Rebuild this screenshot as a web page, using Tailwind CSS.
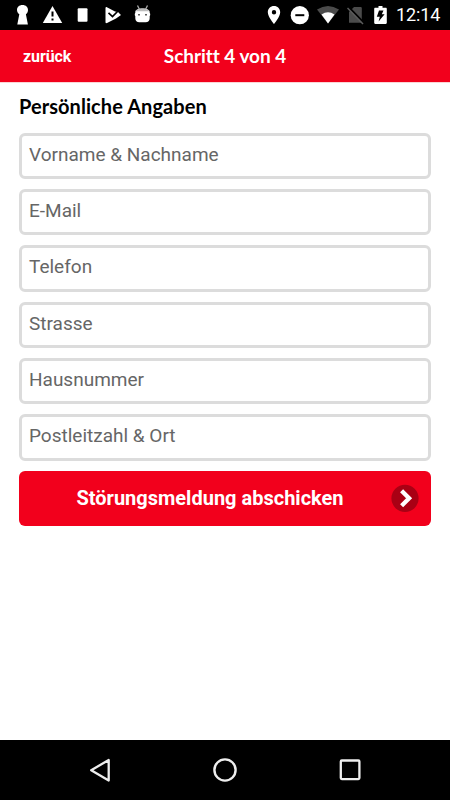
<!DOCTYPE html>
<html lang="de">
<head>
<meta charset="utf-8">
<title>Persönliche Angaben</title>
<script src="https://cdn.jsdelivr.net/npm/@tailwindcss/browser@4"></script>
</head>
<body class="bg-white">
<div class="flex h-[800px] w-[450px] flex-col overflow-hidden font-['Roboto',sans-serif]">
  <div class="flex h-[30px] shrink-0 items-start justify-between bg-black pl-[16px] pr-[10px] text-white">
    <div class="flex">
      <svg class="mr-[13px] h-[30px] w-[13px]" viewBox="16 0 13 30" fill="#fff"><path d="M22.500 5C19 5 17 7.200 17 10c0 2 1 3.300 2.300 4.200L17.300 24.500h10.600l-2-10.300C27.200 13.300 28 12 28 10c0-2.800-2-5-5.500-5z"/></svg>
      <svg class="mr-[14px] h-[30px] w-[21px]" viewBox="42 0 21 30"><path fill="#fff" d="M52.500 6L62.200 23H42.800z"/><path stroke="#000" stroke-width="2" d="M52.500 11.500v5M52.500 18.500v2"/></svg>
      <svg class="mr-[16px] h-[30px] w-[12px]" viewBox="77 0 12 30"><rect x="77.700" y="8.300" width="9.800" height="13.500" rx="1" fill="#fff"/></svg>
      <svg class="mr-[12px] h-[30px] w-[17px]" viewBox="105 0 17 30"><path fill="#fff" d="M105.500 8c0-.8.700-1.200 1.400-.8L115 11.500l3 .5 3 3-5 3.500L107 23c-.8.400-1.500 0-1.500-.8z"/><path d="M108.500 12.800l4 3.700 6.500-6.500" fill="none" stroke="#000" stroke-width="1.700"/></svg>
      <svg class="h-[30px] w-[17px]" viewBox="134 0 17 30"><path d="M137.500 5.500l2 4M147.500 5.500l-2 4" stroke="#aaa" stroke-width="1.300"/><path fill="#fff" d="M135.300 12c0-2 3-3.500 7.200-3.500s7.200 1.500 7.200 3.500v1c.7 0 .7 3 0 3v2.200c0 2.800-1.700 4-4 4h-6.400c-2.300 0-4-1.200-4-4V16c-.7 0-.7-3 0-3z"/><path fill="#bbb" d="M135.500 11.300c1-2 3.500-2.800 7-2.800s6 .8 7 2.800z"/><path fill="#333" d="M138.200 14h1.600v1.500h-1.600zM145.200 14h1.600v1.500h-1.600z"/></svg>
    </div>
    <div class="flex">
      <svg class="mr-[9px] h-[30px] w-[14px]" viewBox="267 0 14 30"><path fill="#fff" fill-rule="evenodd" d="M274 6c-3.500 0-6.200 2.700-6.200 6.200 0 4.600 6.200 11.800 6.200 11.800s6.200-7.200 6.200-11.800C280.200 8.700 277.500 6 274 6zm0 4a2.200 2.200 0 1 1 0 4.400 2.200 2.200 0 0 1 0-4.400z"/></svg>
      <svg class="mr-[6px] h-[30px] w-[20px]" viewBox="290 0 20 30"><circle cx="299.800" cy="15.200" r="9.100" fill="#fff"/><path d="M295.300 15.200h9" stroke="#000" stroke-width="2"/></svg>
      <svg class="mr-[7px] h-[30px] w-[24px]" viewBox="316 0 24 30"><path fill="#4b4b4b" d="M317 9.600q11-7 22 0L328 23.500z"/><path fill="#fff" d="M321.500 14.500q6.500-4.500 13 0L328 23.500z"/></svg>
      <svg class="mr-[10px] h-[30px] w-[17px]" viewBox="347 0 17 30"><path fill="#4b4b4b" d="M354 7h6.500c.8 0 1.300.5 1.300 1.300v14.400h-12.800V12z"/><path d="M348.500 7l16 16.500" stroke="#000" stroke-width="2"/><path d="M347.500 8l15.500 16" stroke="#5c5c5c" stroke-width="1.500"/></svg>
      <svg class="mr-[8px] h-[30px] w-[14px]" viewBox="374 0 14 30"><path fill="#fff" d="M378.500 6h4v1.700h3.200c.7 0 1.100.4 1.100 1.100v14c0 .7-.4 1.200-1.100 1.200h-10.400c-.7 0-1.100-.5-1.100-1.200v-14c0-.7.400-1.100 1.100-1.100h3.200z"/><path fill="#000" d="M379 10.500h4.500l-1.700 3.800h2.800l-6 7.200 1.200-4.800h-3z"/></svg>
      <span class="w-[44px] whitespace-nowrap text-[18px] leading-[30px] tracking-[-0.100px]">12:14</span>
    </div>
  </div>
  <header class="grid h-[52px] shrink-0 grid-cols-[1fr_auto_1fr] items-center bg-[#f2001c] text-white">
    <span class="pl-[23px] pt-px text-[16px] font-bold leading-[20px] tracking-[-0.100px]">zurück</span>
    <h1 class="font-['Lato',sans-serif] text-[19px] font-bold leading-[24px] tracking-[-0.050px]">Schritt 4 von 4</h1>
  </header>
  <main class="flex-1 border-t border-[#fbd5d5] px-[19px] pt-[10px]">
    <h2 class="font-['Lato',sans-serif] text-[20px] font-bold leading-[26px] tracking-[0.060px] text-black">Persönliche Angaben</h2>
    <form class="mt-[13.500px] flex flex-col gap-[10px]">
      <div class="flex h-[46.400px] items-center rounded-[6px] border-[3px] border-[#dcdcdc] pb-[1px] pl-[7px] text-[19px] text-[#666]">Vorname &amp; Nachname</div>
      <div class="flex h-[46.400px] items-center rounded-[6px] border-[3px] border-[#dcdcdc] pb-[1px] pl-[7px] text-[19px] text-[#666]">E-Mail</div>
      <div class="flex h-[46.400px] items-center rounded-[6px] border-[3px] border-[#dcdcdc] pb-[2px] pl-[7px] text-[19px] text-[#666]">Telefon</div>
      <div class="flex h-[46.400px] items-center rounded-[6px] border-[3px] border-[#dcdcdc] pb-[1px] pl-[7px] text-[19px] text-[#666]">Strasse</div>
      <div class="flex h-[46.400px] items-center rounded-[6px] border-[3px] border-[#dcdcdc] pb-[2px] pl-[7px] text-[19px] text-[#666]">Hausnummer</div>
      <div class="flex h-[46.400px] items-center rounded-[6px] border-[3px] border-[#dcdcdc] pb-[2px] pl-[7px] text-[19px] text-[#666]">Postleitzahl &amp; Ort</div>
      <button type="button" class="mt-[0.300px] flex h-[54.500px] items-center rounded-[6px] bg-[#f2001c] pr-[12px] text-[20px] font-bold text-white">
        <span class="flex-1 whitespace-nowrap pl-[10px] text-center">Störungsmeldung abschicken</span>
        <svg class="h-[28px] w-[28px]" viewBox="0 0 28 28"><circle cx="14" cy="14.300" r="13.600" fill="#a90014"/><path d="M10.600 6.800l7.500 7.500-7.500 7.500" fill="none" stroke="#fff" stroke-width="4.300"/></svg>
      </button>
    </form>
  </main>
  <nav class="flex h-[60px] shrink-0 items-center justify-between bg-black px-[87px]">
    <svg class="h-[26px] w-[26px]" viewBox="0 0 26 26"><path d="M21.700 3v20.500L4.200 13.200z" fill="none" stroke="#eee" stroke-width="2.300" stroke-linejoin="round"/></svg>
    <svg class="h-[26px] w-[26px]" viewBox="0 0 26 26"><circle cx="13" cy="13" r="10.600" fill="none" stroke="#eee" stroke-width="2.400"/></svg>
    <svg class="h-[26px] w-[26px]" viewBox="0 0 26 26"><rect x="3.800" y="3.500" width="18.600" height="18.600" rx="1" fill="none" stroke="#eee" stroke-width="2.300"/></svg>
  </nav>
</div>
</body>
</html>
